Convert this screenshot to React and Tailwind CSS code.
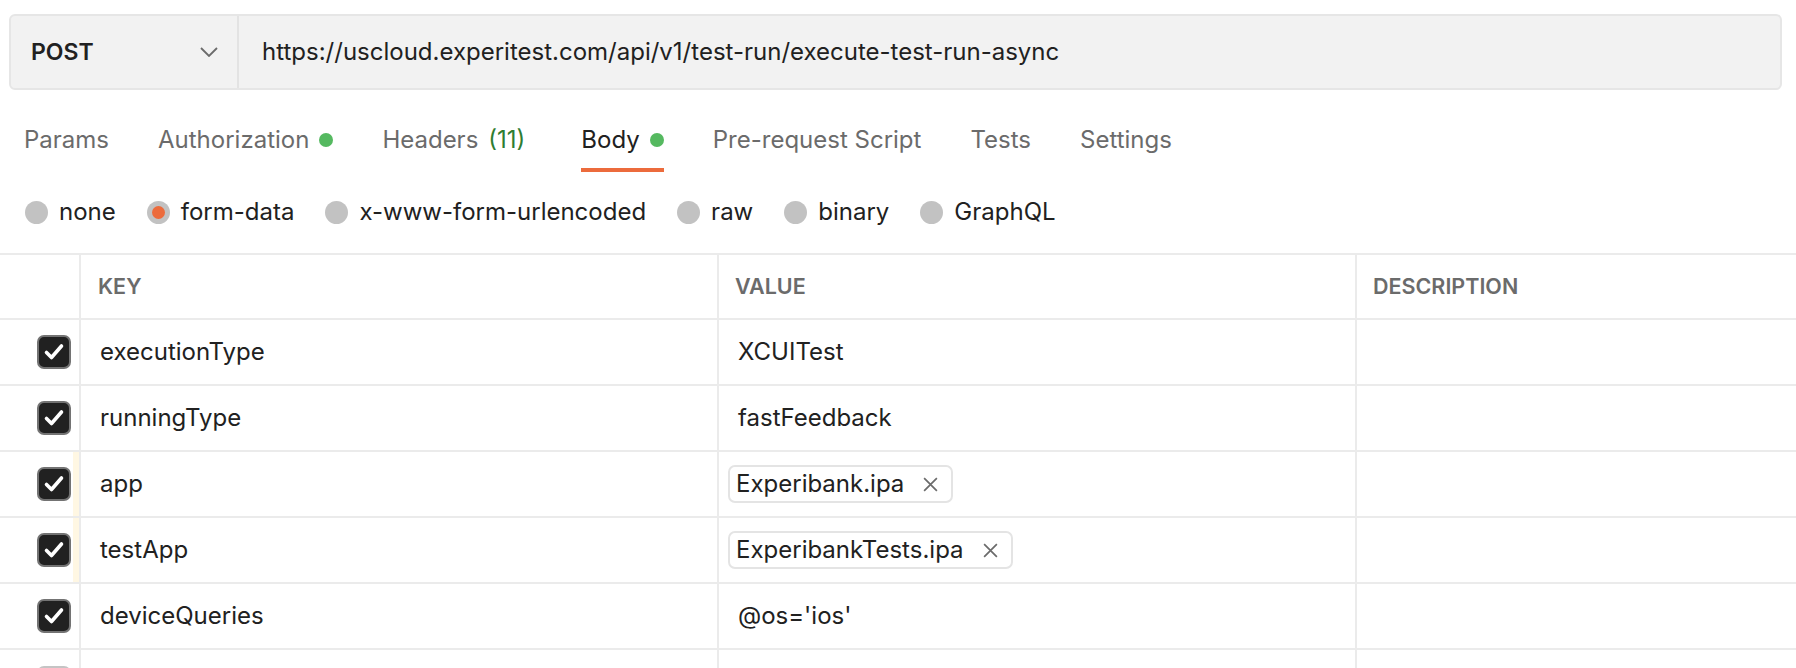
import React from "react";

const tabs = [
  { label: "Params" },
  { label: "Authorization", dot: true },
  { label: "Headers", count: "(11)" },
  { label: "Body", dot: true, active: true },
  { label: "Pre-request Script" },
  { label: "Tests" },
  { label: "Settings" },
];

const bodyTypes = [
  { label: "none" },
  { label: "form-data", selected: true },
  { label: "x-www-form-urlencoded" },
  { label: "raw" },
  { label: "binary" },
  { label: "GraphQL" },
];

const rows = [
  { key: "executionType", value: "XCUITest" },
  { key: "runningType", value: "fastFeedback" },
  { key: "app", file: "Experibank.ipa", marked: true },
  { key: "testApp", file: "ExperibankTests.ipa", marked: true },
  { key: "deviceQueries", value: "@os='ios'" },
];

const Checkbox = ({ checked }) =>
  checked ? (
    <div className="w-[34px] h-[34px] rounded-[7px] bg-[#212121] border-2 border-[#737373] flex items-center justify-center">
      <svg width="24" height="24" viewBox="0 0 24 24" fill="none">
        <path
          d="M4.5 12.5 L9.5 17.5 L19.5 6"
          stroke="#fff"
          strokeWidth="3.6"
          strokeLinecap="round"
          strokeLinejoin="round"
        />
      </svg>
    </div>
  ) : (
    <div className="w-[34px] h-[34px] rounded-[7px] bg-white border-2 border-[#c4c4c4]" />
  );

const FileChip = ({ name }) => (
  <div className="inline-flex items-center h-[38px] pl-[6px] pr-[12px] gap-[18px] rounded-[7px] border-2 border-[#e4e4e4] bg-white">
    <span>{name}</span>
    <svg width="17" height="17" viewBox="0 0 16 16" fill="none">
      <path d="M2 2 L14 14 M14 2 L2 14" stroke="#6b6b6b" strokeWidth="1.6" />
    </svg>
  </div>
);

const App = () => {
  return (
    <div
      className="w-[1796px] h-[668px] overflow-hidden bg-white text-[#212121]"
      style={{ fontFamily: "Inter, 'Noto Sans', sans-serif" }}
    >
      {/* URL bar */}
      <div className="pt-[14px] pl-[9px] pr-[14px]">
        <div className="flex h-[76px] rounded-[6px] border-2 border-[#e6e6e6] bg-[#f2f2f2]">
          <div className="w-[228px] flex items-center justify-between pl-[20px] pr-[19px] border-r-2 border-[#e3e3e3]">
            <span className="text-[23px] font-semibold">POST</span>
            <svg width="18" height="10" viewBox="0 0 18 10" fill="none">
              <path d="M1 1 L9 9 L17 1" stroke="#6b6b6b" strokeWidth="1.8" />
            </svg>
          </div>
          <div className="flex items-center pl-[23px] text-[24px]">
            https://uscloud.experitest.com/api/v1/test-run/execute-test-run-async
          </div>
        </div>
      </div>

      {/* Tabs */}
      <div className="flex gap-[49px] pl-[24px] mt-[34px] text-[24px]">
        {tabs.map((t) => (
          <div
            key={t.label}
            className={`flex items-center gap-[10px] h-[48px] pb-[12px] border-b-4 ${
              t.active ? "ml-[7px] border-[#ec6b3c] text-[#212121]" : "border-transparent text-[#6b6b6b]"
            }`}
          >
            <span className="leading-[32px]">
              {t.label}
              {t.count && <span className="ml-[10px] text-[#2e7d32]">{t.count}</span>}
            </span>
            {t.dot && <span className="w-[14px] h-[14px] rounded-full bg-[#55b960]" />}
          </div>
        ))}
      </div>

      {/* Body type radios */}
      <div className="flex items-center gap-[31px] pl-[25px] mt-[24px] h-[32px] text-[24px]">
        {bodyTypes.map((b) => (
          <div key={b.label} className="flex items-center gap-[11px]">
            <span className="w-[23px] h-[23px] rounded-full bg-[#c2c2c2] flex items-center justify-center">
              {b.selected && <span className="w-[13px] h-[13px] rounded-full bg-[#ec6b3c]" />}
            </span>
            <span>{b.label}</span>
          </div>
        ))}
      </div>

      {/* Form data table */}
      <div className="mt-[25px] border-t-2 border-[#ebebeb]">
        <div className="grid grid-cols-[79px_638px_638px_1fr] h-[65px] border-b-2 border-[#ebebeb] text-[21.5px] font-semibold text-[#6b6b6b]">
          <div />
          <div className="flex items-center pl-[17px] border-l-2 border-[#ebebeb]">KEY</div>
          <div className="flex items-center pl-[16px] border-l-2 border-[#ebebeb]">VALUE</div>
          <div className="flex items-center pl-[16px] border-l-2 border-[#ebebeb]">DESCRIPTION</div>
        </div>
        {rows.map((r) => (
          <div
            key={r.key}
            className="grid grid-cols-[79px_638px_638px_1fr] h-[66px] border-b-2 border-[#ebebeb] text-[24px]"
          >
            <div className="flex items-center justify-between pl-[37px]">
              <Checkbox checked />
              <span className={`w-[6px] h-full ${r.marked ? "bg-[#fff7e3]" : ""}`} />
            </div>
            <div className="flex items-center pl-[19px] border-l-2 border-[#ebebeb]">{r.key}</div>
            <div className="flex items-center pl-[9px] border-l-2 border-[#ebebeb]">
              {r.file ? <FileChip name={r.file} /> : <span className="pl-[10px]">{r.value}</span>}
            </div>
            <div className="border-l-2 border-[#ebebeb]" />
          </div>
        ))}
        <div className="grid grid-cols-[79px_638px_638px_1fr] h-[66px] text-[24px]">
          <div className="flex items-center pl-[37px]">
            <Checkbox checked={false} />
          </div>
          <div className="border-l-2 border-[#ebebeb]" />
          <div className="border-l-2 border-[#ebebeb]" />
          <div className="border-l-2 border-[#ebebeb]" />
        </div>
      </div>
    </div>
  );
};

export default App;
